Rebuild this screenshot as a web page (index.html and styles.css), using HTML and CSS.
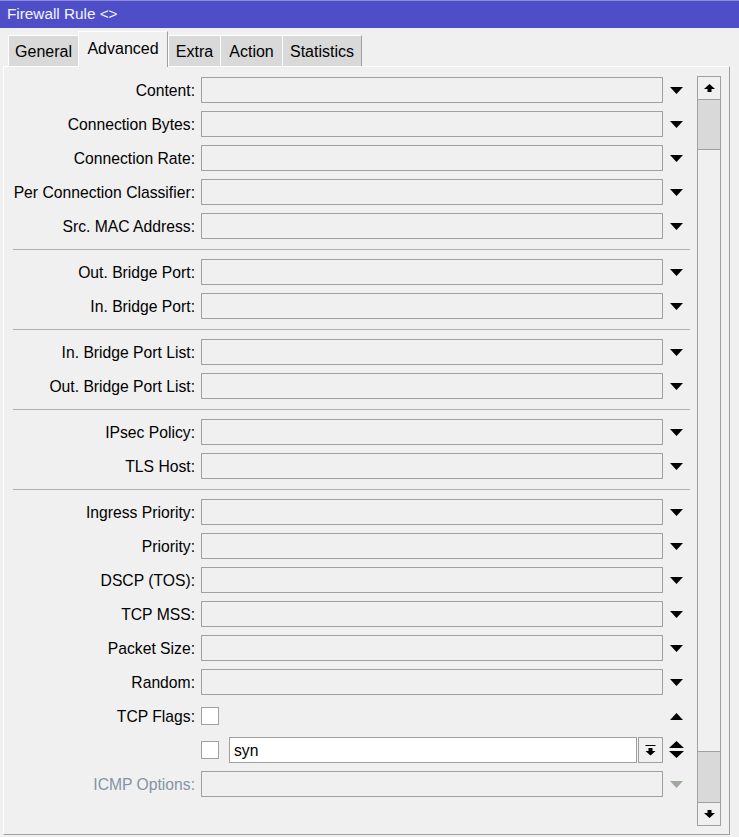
FILE: index.html
```html
<!DOCTYPE html>
<html>
<head>
<meta charset="utf-8">
<link rel="stylesheet" href="styles.css">
</head>
<body>
<div class="titlebar">Firewall Rule &lt;&gt;</div>
<div class="tabs">
  <div class="tab t-general">General</div>
  <div class="tab tab-active t-advanced">Advanced</div>
  <div class="tab t-extra">Extra</div>
  <div class="tab t-action">Action</div>
  <div class="tab tab-last t-stats">Statistics</div>
</div>
<div class="panel">
  <div class="form">
    <div class="row"><div class="label">Content:</div><div class="field"></div><div class="arrow"><svg width="13" height="7" viewBox="0 0 13 7"><polygon points="0,0 13,0 6.5,7"/></svg></div></div>
    <div class="row"><div class="label">Connection Bytes:</div><div class="field"></div><div class="arrow"><svg width="13" height="7" viewBox="0 0 13 7"><polygon points="0,0 13,0 6.5,7"/></svg></div></div>
    <div class="row"><div class="label">Connection Rate:</div><div class="field"></div><div class="arrow"><svg width="13" height="7" viewBox="0 0 13 7"><polygon points="0,0 13,0 6.5,7"/></svg></div></div>
    <div class="row"><div class="label">Per Connection Classifier:</div><div class="field"></div><div class="arrow"><svg width="13" height="7" viewBox="0 0 13 7"><polygon points="0,0 13,0 6.5,7"/></svg></div></div>
    <div class="row"><div class="label">Src. MAC Address:</div><div class="field"></div><div class="arrow"><svg width="13" height="7" viewBox="0 0 13 7"><polygon points="0,0 13,0 6.5,7"/></svg></div></div>
    <div class="sep"></div>
    <div class="row"><div class="label">Out. Bridge Port:</div><div class="field"></div><div class="arrow"><svg width="13" height="7" viewBox="0 0 13 7"><polygon points="0,0 13,0 6.5,7"/></svg></div></div>
    <div class="row"><div class="label">In. Bridge Port:</div><div class="field"></div><div class="arrow"><svg width="13" height="7" viewBox="0 0 13 7"><polygon points="0,0 13,0 6.5,7"/></svg></div></div>
    <div class="sep"></div>
    <div class="row"><div class="label">In. Bridge Port List:</div><div class="field"></div><div class="arrow"><svg width="13" height="7" viewBox="0 0 13 7"><polygon points="0,0 13,0 6.5,7"/></svg></div></div>
    <div class="row"><div class="label">Out. Bridge Port List:</div><div class="field"></div><div class="arrow"><svg width="13" height="7" viewBox="0 0 13 7"><polygon points="0,0 13,0 6.5,7"/></svg></div></div>
    <div class="sep"></div>
    <div class="row"><div class="label">IPsec Policy:</div><div class="field"></div><div class="arrow"><svg width="13" height="7" viewBox="0 0 13 7"><polygon points="0,0 13,0 6.5,7"/></svg></div></div>
    <div class="row"><div class="label">TLS Host:</div><div class="field"></div><div class="arrow"><svg width="13" height="7" viewBox="0 0 13 7"><polygon points="0,0 13,0 6.5,7"/></svg></div></div>
    <div class="sep"></div>
    <div class="row"><div class="label">Ingress Priority:</div><div class="field"></div><div class="arrow"><svg width="13" height="7" viewBox="0 0 13 7"><polygon points="0,0 13,0 6.5,7"/></svg></div></div>
    <div class="row"><div class="label">Priority:</div><div class="field"></div><div class="arrow"><svg width="13" height="7" viewBox="0 0 13 7"><polygon points="0,0 13,0 6.5,7"/></svg></div></div>
    <div class="row"><div class="label">DSCP (TOS):</div><div class="field"></div><div class="arrow"><svg width="13" height="7" viewBox="0 0 13 7"><polygon points="0,0 13,0 6.5,7"/></svg></div></div>
    <div class="row"><div class="label">TCP MSS:</div><div class="field"></div><div class="arrow"><svg width="13" height="7" viewBox="0 0 13 7"><polygon points="0,0 13,0 6.5,7"/></svg></div></div>
    <div class="row"><div class="label">Packet Size:</div><div class="field"></div><div class="arrow"><svg width="13" height="7" viewBox="0 0 13 7"><polygon points="0,0 13,0 6.5,7"/></svg></div></div>
    <div class="row"><div class="label">Random:</div><div class="field"></div><div class="arrow"><svg width="13" height="7" viewBox="0 0 13 7"><polygon points="0,0 13,0 6.5,7"/></svg></div></div>
    <div class="row"><div class="label">TCP Flags:</div><div class="cbcell"><div class="checkbox"></div></div><div class="arrow"><svg width="13" height="7" viewBox="0 0 13 7"><polygon points="0,7 13,7 6.5,0"/></svg></div></div>
    <div class="row"><div class="label"></div>
      <div class="multi">
        <div class="checkbox"></div>
        <div class="input">syn</div>
        <div class="btn"><svg width="11" height="11" viewBox="0 0 11 11"><rect x="0.5" y="0" width="10" height="1"/><rect x="3.5" y="3" width="4" height="3"/><polygon points="0.5,6 10.5,6 5.5,10.5"/></svg></div>
      </div>
      <div class="arrow arrow-wide"><svg width="15" height="18" viewBox="0 0 15 18"><polygon points="0,7 15,7 7.5,0"/><polygon points="0,10 15,10 7.5,17"/></svg></div>
    </div>
    <div class="row disabled"><div class="label">ICMP Options:</div><div class="field"></div><div class="arrow"><svg width="13" height="7" viewBox="0 0 13 7"><polygon points="0,0 13,0 6.5,7"/></svg></div></div>
  </div>
  <div class="scroll">
    <div class="sbtn sbtn-up"><svg width="11" height="8" viewBox="0 0 11 8"><polygon points="5.5,0 11,5 7.5,5 7.5,8 3.5,8 3.5,5 0,5"/></svg></div>
    <div class="thumb"></div>
    <div class="track"></div>
    <div class="thumb2"></div>
    <div class="sbtn sbtn-down"><svg width="11" height="8" viewBox="0 0 11 8"><polygon points="3.5,0 7.5,0 7.5,3 11,3 5.5,8 0,3 3.5,3"/></svg></div>
  </div>
</div>
</body>
</html>
```
FILE: styles.css
```css
* { box-sizing: border-box; }
html, body { margin: 0; padding: 0; }
body {
  width: 739px;
  height: 837px;
  background: #f0f0f0;
  font-family: "Liberation Sans", Arial, sans-serif;
  font-size: 15.7px;
  color: #000;
  overflow: hidden;
}
.titlebar {
  height: 28px;
  background: #4e4fc8;
  border-top: 1px solid #8a8ad8;
  color: #f4f4ff;
  font-size: 15.3px;
  line-height: 26px;
  padding-left: 7px;
}
.tabs {
  height: 38px;
  display: flex;
  align-items: flex-end;
  padding-left: 8px;
  font-size: 16px;
}
.tab {
  height: 31px;
  background: #d9d9d9;
  border-top: 1px solid #ffffff;
  border-left: 1px solid #ffffff;
  text-align: center;
  line-height: 31px;
}
.t-general { width: 70px; }
.t-advanced { width: 90px; }
.t-extra { width: 52px; }
.t-action { width: 62px; }
.t-stats { width: 80px; }
.tab-last { border-right: 1px solid #a0a0a0; }
.tab-active {
  height: 36px;
  background: #f0f0f0;
  border-right: 1px solid #a0a0a0;
  margin-bottom: -1px;
  position: relative;
  z-index: 1;
  line-height: 34px;
}
.panel {
  margin-left: 3px;
  width: 727px;
  height: 769px;
  border-top: 1px solid #ffffff;
  border-left: 1px solid #ffffff;
  border-right: 1px solid #a0a0a0;
  border-bottom: 1px solid #a0a0a0;
  display: flex;
}
.form {
  flex: 1;
  padding-top: 10px;
  display: flex;
  flex-direction: column;
  gap: 8px;
}
.row {
  height: 26px;
  display: grid;
  grid-template-columns: 191px 462px 28px;
  grid-template-rows: 26px;
  column-gap: 6px;
  align-items: center;
}
.label {
  text-align: right;
  white-space: nowrap;
  height: 26px;
  line-height: 25px;
  padding-top: 1px;
}
.field {
  height: 26px;
  border: 1px solid #a0a0a0;
  background: #f0f0f0;
}
.arrow {
  display: flex;
  justify-content: flex-start;
  align-items: center;
  padding-left: 1px;
}
.arrow-wide { padding-left: 0; }
.arrow svg, .btn svg, .sbtn svg { display: block; fill: #000; }
.sep {
  height: 1px;
  margin: 2px 7px 1px 9px;
  background: #b0b0b0;
}
.cbcell { display: flex; align-items: center; }
.checkbox {
  width: 18px;
  height: 18px;
  background: #ffffff;
  border: 1px solid #a0a0a0;
}
.multi {
  display: flex;
  align-items: center;
  height: 26px;
}
.multi .checkbox { margin-right: 10px; }
.input {
  width: 408px;
  height: 26px;
  background: #ffffff;
  border: 1px solid #a0a0a0;
  padding-left: 4px;
  padding-top: 1px;
  line-height: 24px;
  margin-right: 1px;
}
.btn {
  width: 25px;
  height: 26px;
  border: 1px solid #a0a0a0;
  background: #f0f0f0;
  display: flex;
  align-items: center;
  justify-content: center;
}
.disabled .label { color: #8494a4; }
.disabled .arrow svg { fill: #a0a8a0; }
.scroll {
  width: 24px;
  margin: 9px 8px 8px 0;
  border: 1px solid #a0a0a0;
  display: flex;
  flex-direction: column;
}
.sbtn {
  height: 23px;
  display: flex;
  align-items: center;
  justify-content: center;
  background: #f0f0f0;
}
.sbtn-up { border-bottom: 1px solid #a0a0a0; }
.sbtn-down { border-top: 1px solid #a0a0a0; }
.thumb {
  height: 50px;
  background: #d9d9d9;
  border-bottom: 1px solid #a0a0a0;
}
.track { flex: 1; background: #f0f0f0; }
.thumb2 {
  height: 51px;
  background: #d9d9d9;
  border-top: 1px solid #a0a0a0;
}
```
